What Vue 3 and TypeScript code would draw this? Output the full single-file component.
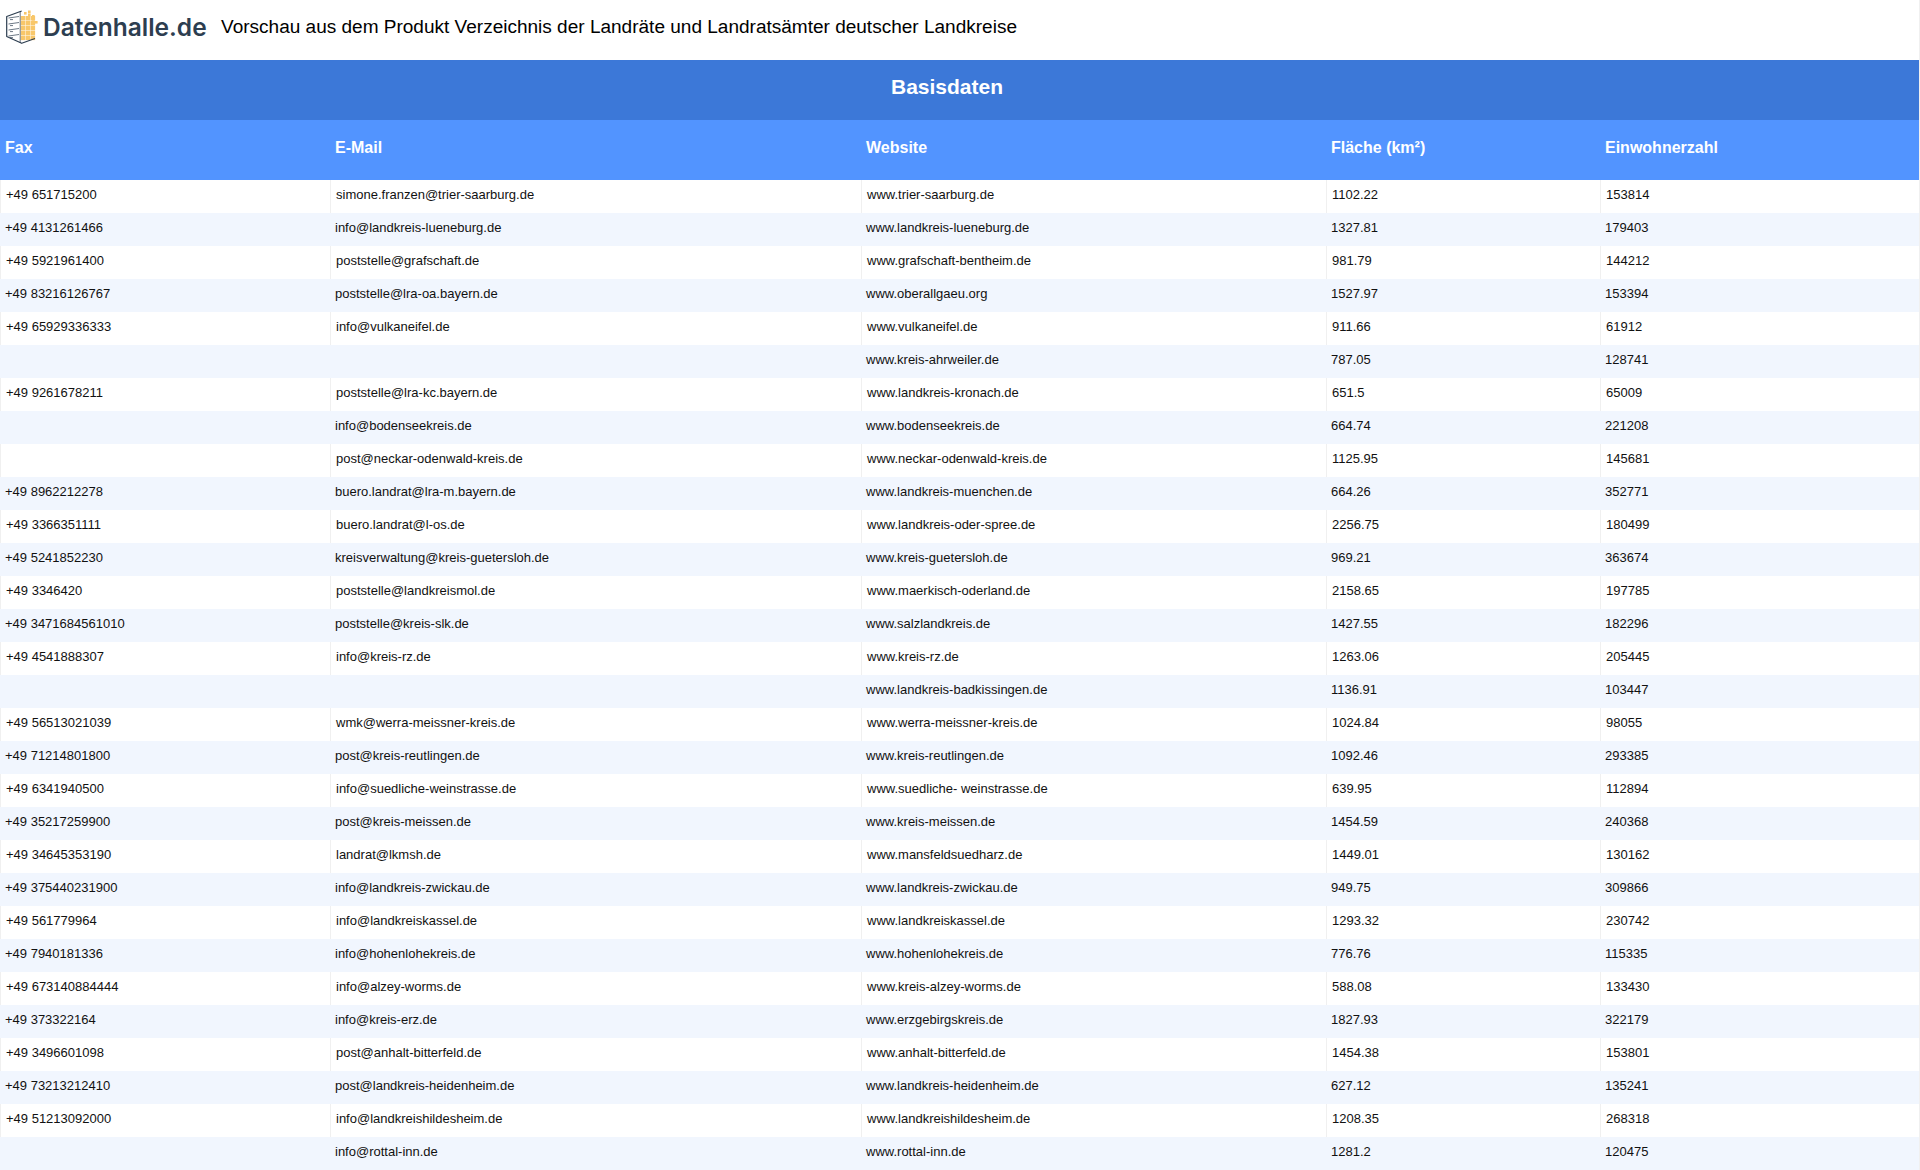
<script setup lang="ts">
type Row = [string, string, string, string, string];
const columns: string[] = ["Fax", "E-Mail", "Website", "Fläche (km²)", "Einwohnerzahl"];
const widths: number[] = [330, 531, 465, 274, 319];
const rows: Row[] = [
  ["+49 651715200", "simone.franzen@trier-saarburg.de", "www.trier-saarburg.de", "1102.22", "153814"],
  ["+49 4131261466", "info@landkreis-lueneburg.de", "www.landkreis-lueneburg.de", "1327.81", "179403"],
  ["+49 5921961400", "poststelle@grafschaft.de", "www.grafschaft-bentheim.de", "981.79", "144212"],
  ["+49 83216126767", "poststelle@lra-oa.bayern.de", "www.oberallgaeu.org", "1527.97", "153394"],
  ["+49 65929336333", "info@vulkaneifel.de", "www.vulkaneifel.de", "911.66", "61912"],
  ["", "", "www.kreis-ahrweiler.de", "787.05", "128741"],
  ["+49 9261678211", "poststelle@lra-kc.bayern.de", "www.landkreis-kronach.de", "651.5", "65009"],
  ["", "info@bodenseekreis.de", "www.bodenseekreis.de", "664.74", "221208"],
  ["", "post@neckar-odenwald-kreis.de", "www.neckar-odenwald-kreis.de", "1125.95", "145681"],
  ["+49 8962212278", "buero.landrat@lra-m.bayern.de", "www.landkreis-muenchen.de", "664.26", "352771"],
  ["+49 3366351111", "buero.landrat@l-os.de", "www.landkreis-oder-spree.de", "2256.75", "180499"],
  ["+49 5241852230", "kreisverwaltung@kreis-guetersloh.de", "www.kreis-guetersloh.de", "969.21", "363674"],
  ["+49 3346420", "poststelle@landkreismol.de", "www.maerkisch-oderland.de", "2158.65", "197785"],
  ["+49 3471684561010", "poststelle@kreis-slk.de", "www.salzlandkreis.de", "1427.55", "182296"],
  ["+49 4541888307", "info@kreis-rz.de", "www.kreis-rz.de", "1263.06", "205445"],
  ["", "", "www.landkreis-badkissingen.de", "1136.91", "103447"],
  ["+49 56513021039", "wmk@werra-meissner-kreis.de", "www.werra-meissner-kreis.de", "1024.84", "98055"],
  ["+49 71214801800", "post@kreis-reutlingen.de", "www.kreis-reutlingen.de", "1092.46", "293385"],
  ["+49 6341940500", "info@suedliche-weinstrasse.de", "www.suedliche- weinstrasse.de", "639.95", "112894"],
  ["+49 35217259900", "post@kreis-meissen.de", "www.kreis-meissen.de", "1454.59", "240368"],
  ["+49 34645353190", "landrat@lkmsh.de", "www.mansfeldsuedharz.de", "1449.01", "130162"],
  ["+49 375440231900", "info@landkreis-zwickau.de", "www.landkreis-zwickau.de", "949.75", "309866"],
  ["+49 561779964", "info@landkreiskassel.de", "www.landkreiskassel.de", "1293.32", "230742"],
  ["+49 7940181336", "info@hohenlohekreis.de", "www.hohenlohekreis.de", "776.76", "115335"],
  ["+49 673140884444", "info@alzey-worms.de", "www.kreis-alzey-worms.de", "588.08", "133430"],
  ["+49 373322164", "info@kreis-erz.de", "www.erzgebirgskreis.de", "1827.93", "322179"],
  ["+49 3496601098", "post@anhalt-bitterfeld.de", "www.anhalt-bitterfeld.de", "1454.38", "153801"],
  ["+49 73213212410", "post@landkreis-heidenheim.de", "www.landkreis-heidenheim.de", "627.12", "135241"],
  ["+49 51213092000", "info@landkreishildesheim.de", "www.landkreishildesheim.de", "1208.35", "268318"],
  ["", "info@rottal-inn.de", "www.rottal-inn.de", "1281.2", "120475"],
];
const cells: [number, number][] = [];
for (let c = 0; c < 3; c++) for (let r = 0; r < 5; r++) cells.push([c, r]);
const bits: [number, number][] = [[20, 2], [24, 3.5], [28, 5], [24, 0.5], [28, 8], [31, 11]];
const slots: number[] = [8, 14, 20, 26];
</script>

<template>
  <div class="page">
    <header class="topbar">
      <div class="logo">
        <svg class="mark" viewBox="0 0 37 36" width="37" height="36" aria-hidden="true">
          <g fill="#f8c76a">
            <rect v-for="(c, i) in cells" :key="i" :x="16.8 + c[0] * 4.9" :y="6 + c[1] * 4.9" width="4.5" height="4.5" />
            <rect v-for="(b, i) in bits" :key="'b' + i" :x="b[0]" :y="b[1]" width="2.6" height="2.6" />
          </g>
          <path d="M17.7 1 L2.7 6.5 V26.5 L17.7 33.3 L31 28.5" fill="none" stroke="#2d3e50" stroke-width="1.2" stroke-linejoin="round" />
          <g v-for="y in slots" :key="y" fill="none" stroke="#2d3e50" stroke-width="0.7">
            <path :d="`M4.5 ${y} L15 ${y - 1.5}`" />
            <path :d="`M6 ${y + 1.6} H9`" />
          </g>
          <path d="M16.2 2 V33" stroke="#2d3e50" stroke-width="0.7" />
        </svg>
        <span class="wordmark">Datenhalle.de</span>
      </div>
      <h1 class="headline">Vorschau aus dem Produkt Verzeichnis der Landräte und Landratsämter deutscher Landkreise</h1>
    </header>
    <table class="sheet">
      <colgroup>
        <col v-for="(w, i) in widths" :key="i" :style="{ width: w + 'px' }" />
      </colgroup>
      <thead>
        <tr><th class="group" colspan="5">Basisdaten</th></tr>
        <tr><th v-for="c in columns" :key="c" class="col">{{ c }}</th></tr>
      </thead>
      <tbody>
        <tr v-for="(row, i) in rows" :key="i">
          <td v-for="(v, j) in row" :key="j">{{ v }}</td>
        </tr>
      </tbody>
    </table>
  </div>
</template>

<style scoped>
.page {
  width: 1920px;
  height: 1170px;
  overflow: hidden;
  box-sizing: border-box;
  border-right: 1px solid #f0f0f0;
  background: #fff;
  font-family: "Liberation Sans", Arial, sans-serif;
  color: #000;
}
.topbar {
  height: 60px;
  display: flex;
  align-items: center;
  box-sizing: border-box;
  padding: 0 0 6px 4px;
}
.logo {
  display: flex;
  align-items: center;
  width: 217px;
  flex: none;
}
.mark {
  flex: none;
  margin-top: 2px;
}
.wordmark {
  margin-left: 2px;
  font-family: Inter, "Liberation Sans", sans-serif;
  font-weight: 600;
  font-size: 24.5px;
  color: #2d3e50;
  white-space: nowrap;
}
.headline {
  margin: 0;
  font-size: 19.03px;
  font-weight: 400;
  white-space: nowrap;
  color: #000;
}
.sheet {
  width: 1919px;
  table-layout: fixed;
  border-collapse: separate;
  border-spacing: 0;
}
th {
  height: 60px;
  box-sizing: border-box;
  color: #fff;
  font-weight: 700;
}
.group {
  background: #3c78d8;
  text-align: center;
  font-size: 21px;
  padding: 0 25px 6px 0;
}
.col {
  background: #5294ff;
  text-align: left;
  font-size: 16px;
  padding: 0 0 5px 5px;
}
td {
  height: 33px;
  box-sizing: border-box;
  padding: 0 0 5px 5px;
  font-size: 13px;
  white-space: nowrap;
  color: #111;
}
tbody tr:nth-child(odd) td {
  border-left: 1px solid #f0f0f0;
  background: #fff;
}
tbody tr:nth-child(even) td {
  background: #f1f6fe;
}
</style>
